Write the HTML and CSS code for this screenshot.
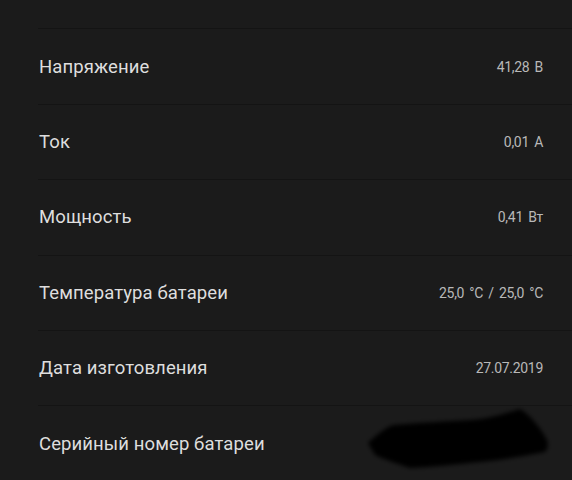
FILE: index.html
```html
<!DOCTYPE html>
<html lang="ru">
<head>
<meta charset="utf-8">
<link rel="stylesheet" href="styles.css">
</head>
<body>
<div class="list">
  <div class="row first"><span class="label">Уровень заряда батареи</span><span class="value">100 %</span></div>
  <div class="row"><span class="label">Напряжение</span><span class="value">41,28 В</span></div>
  <div class="row"><span class="label">Ток</span><span class="value">0,01 А</span></div>
  <div class="row"><span class="label">Мощность</span><span class="value">0,41 Вт</span></div>
  <div class="row"><span class="label">Температура батареи</span><span class="value">25,0 °C / 25,0 °C</span></div>
  <div class="row"><span class="label">Дата изготовления</span><span class="value">27.07.2019</span></div>
  <div class="row last"><span class="label">Серийный номер батареи</span>
    <svg class="redact" width="190" height="76" viewBox="0 0 190 76">
      <defs><filter id="b" x="-10%" y="-30%" width="120%" height="160%"><feGaussianBlur stdDeviation="2"/></filter></defs>
      <path d="M5 37 C12 30 22 22 30 19 C55 17 85 15 107 14 C125 13 140 8 157 3 C166 8 178 22 184 34 C186 40 184 44 182 46 C160 50 140 54 117 56 C95 58 70 61 47 62 C35 58 20 53 12 49 Z" fill="#050505" filter="url(#b)"/>
    </svg>
  </div>
</div>
</body>
</html>
```
FILE: styles.css
```css
html, body {
  margin: 0;
  padding: 0;
  background: #1b1b1b;
}
body {
  width: 572px;
  height: 480px;
  overflow: hidden;
  font-family: Roboto, "Noto Sans", sans-serif;
}
.list {
  margin-top: -46px;
  display: flex;
  flex-direction: column;
}
.row {
  height: 74.4px;
  margin-left: 38px;
  padding-left: 1px;
  padding-right: 29px;
  border-bottom: 1px solid #141414;
  display: flex;
  align-items: center;
  justify-content: space-between;
}
.first {
  align-items: flex-start;
  padding-top: 14px;
  box-sizing: border-box;
  height: 75.4px;
}
.label {
  font-size: 18.5px;
  color: #dedede;
  letter-spacing: 0.1px;
}
.value {
  font-size: 14px;
  color: #b8b8b8;
  letter-spacing: -0.3px;
  word-spacing: 2px;
}
.last {
  border-bottom: none;
}
.redact {
  margin-right: -10px;
  flex-shrink: 0;
}
```
